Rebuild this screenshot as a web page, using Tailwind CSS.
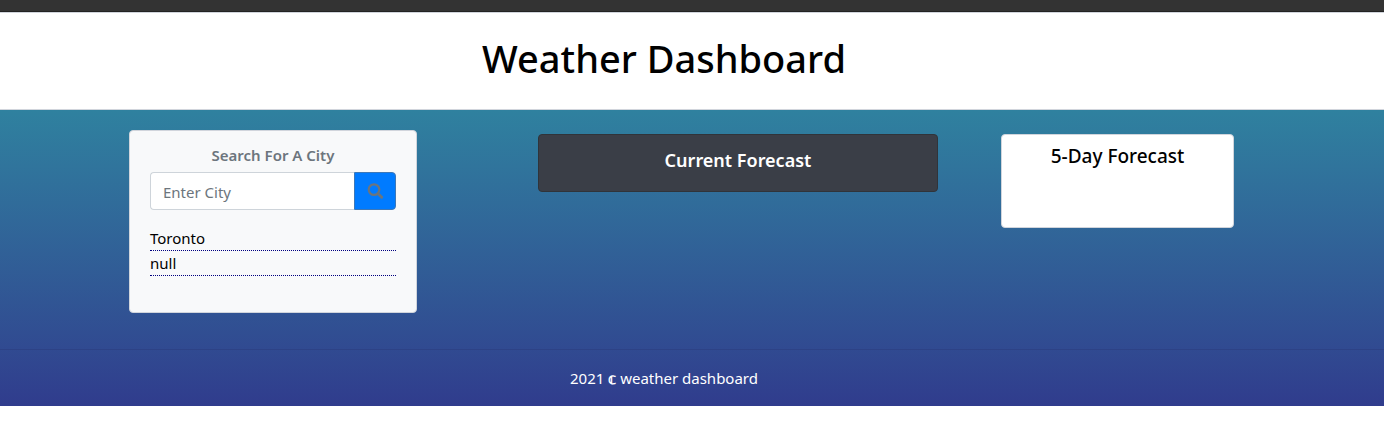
<!DOCTYPE html>
<html lang="en">
<head>
<meta charset="utf-8">
<title>Weather Dashboard</title>
<script src="https://cdn.jsdelivr.net/npm/@tailwindcss/browser@4"></script>
</head>
<body class="bg-white font-['Noto_Sans','Open_Sans',sans-serif] text-[15px] leading-6 text-black">
<div class="h-3 border-b border-[#222] bg-[#333]"></div>
<header class="border-y border-gray-300 pt-[21px] pr-14 pb-[27px] text-center">
  <h1 class="text-[38px] leading-12 font-medium">Weather Dashboard</h1>
</header>
<div class="bg-linear-to-b from-[#2f819f] to-[#303c8d]">
  <main class="grid grid-cols-[129fr_288fr_121fr_400fr_63fr_233fr_150fr] items-start pt-5 pb-9">
    <section class="col-start-2 min-w-0 rounded-sm border border-gray-300 bg-[#f8f9fa] px-5 pt-3 pb-9">
      <form>
        <label for="city" class="mb-1 block pb-px text-center font-semibold text-[#6c757d]">Search For A City</label>
        <div class="flex h-[38px]">
          <input id="city" type="text" placeholder="Enter City" class="w-0 min-w-0 flex-1 rounded-l-sm border border-r-0 border-[#ced4da] bg-white px-3 pt-px placeholder:text-[#6c757d]">
          <button type="button" aria-label="Search" class="flex w-[42px] items-center justify-center rounded-r-sm border border-[#3d78b8] bg-[#007bff] text-[#6c757d]">
            <svg class="size-4" viewBox="0 0 16 16" fill="none" stroke="currentColor" stroke-width="2.2"><circle cx="7" cy="6.6" r="5.3"/><path d="M10.8 10.4 15.6 15.2" stroke-width="2.8"/></svg>
          </button>
        </div>
      </form>
      <ul class="mt-4">
        <li class="border-b border-dotted border-[#000080]">Toronto</li>
        <li class="border-b border-dotted border-[#000080]">null</li>
      </ul>
    </section>
    <section class="col-start-4 mt-1 h-[58px] min-w-0 rounded-sm border border-[#30343a] bg-[#3a3e47] pt-[13px] text-center text-white">
      <h2 class="text-lg leading-6 font-semibold">Current Forecast</h2>
    </section>
    <section class="col-start-6 mt-1 h-[94px] min-w-0 rounded-sm border border-gray-300 bg-white pt-[9px] text-center">
      <h2 class="text-[19px] leading-6 font-medium">5-Day Forecast</h2>
    </section>
  </main>
  <footer class="border-t border-[#2d4286] pt-4 pr-14 pb-4 text-center text-white">2021 <span class="font-bold">𝕔</span> weather dashboard</footer>
</div>
</body>
</html>
